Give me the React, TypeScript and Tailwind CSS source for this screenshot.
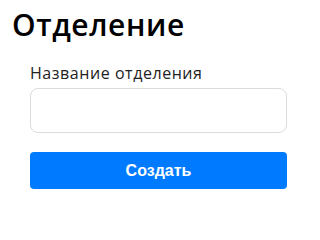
export default function App() {
  return (
    <div className="w-[306px] h-[207px] bg-white pl-[12px] pt-[7px]">
      <h1 className="text-[30px] leading-[36px] font-semibold text-black font-['Open_Sans',sans-serif] tracking-[0.6px]">
        Отделение
      </h1>
      <div className="pl-[18px] pt-[20px] w-[275px]">
        <label className="block text-[16px] leading-[20px] text-[#222] font-['Open_Sans',sans-serif] tracking-[0.55px]">
          Название отделения
        </label>
        <div className="mt-[5px] h-[45px] w-[257px] rounded-[8px] border border-[#dcdcdc] bg-white" />
        <button className="mt-[19px] h-[37px] w-[257px] rounded-[4px] bg-[#007bff] text-white text-[16px] font-bold font-['Liberation_Sans',Arial,sans-serif]">
          Создать
        </button>
      </div>
    </div>
  );
}
